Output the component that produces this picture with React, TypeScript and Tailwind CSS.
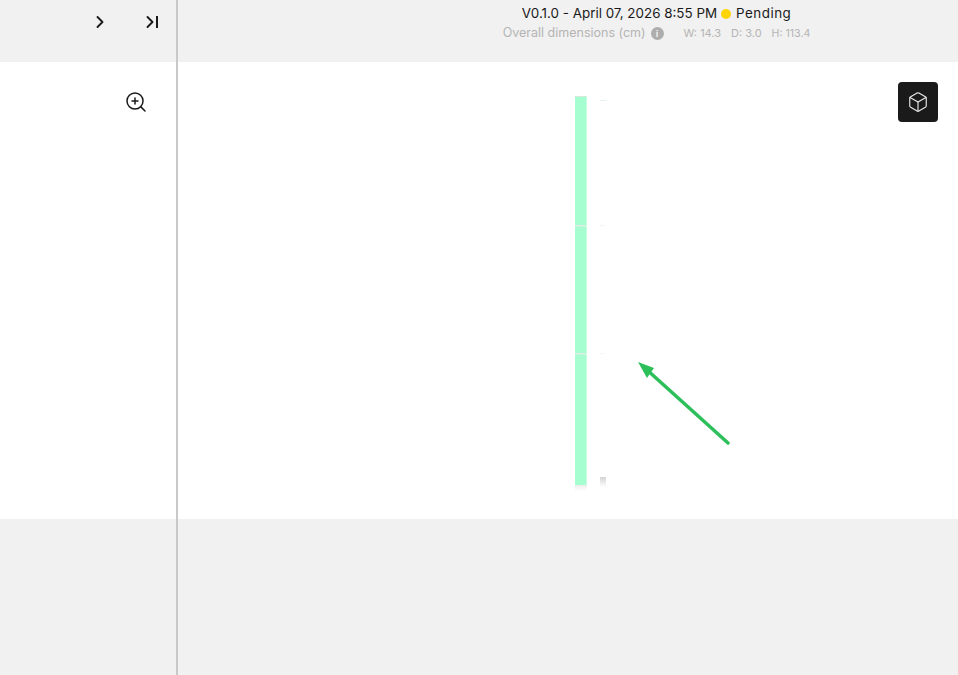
import { ChevronRight, Box, ZoomIn } from "lucide-react";

const FONT = "font-['Inter','Liberation_Sans',sans-serif]";

function ShelfPreview() {
  return (
    <svg className="absolute left-[397px] top-[34px] h-[400px] w-[50px]" viewBox="0 0 50 400" fill="none">
      <defs>
        <linearGradient id="fade" x1="0" y1="0" x2="0" y2="1">
          <stop offset="0" stopColor="#ececec" />
          <stop offset="1" stopColor="#ffffff" />
        </linearGradient>
        <linearGradient id="peg" x1="0" y1="0" x2="0" y2="1">
          <stop offset="0" stopColor="#d4d4d4" />
          <stop offset="1" stopColor="#ffffff" />
        </linearGradient>
      </defs>
      <rect x="0" y="0" width="12" height="389" fill="#a4fecf" />
      <rect x="0" y="0" width="12" height="1" fill="#d9e8e0" />
      <rect x="0" y="129" width="12" height="1.5" fill="#e4ece8" />
      <rect x="0" y="257" width="12" height="1.5" fill="#e4ece8" />
      <rect x="11" y="0" width="1" height="389" fill="#c4fede" />
      <rect x="0" y="389" width="12" height="6" fill="url(#fade)" />
      <rect x="25" y="4" width="6" height="1" fill="#e6f2ec" />
      <rect x="25" y="129" width="5" height="1" fill="#f0f6f3" />
      <rect x="25" y="257" width="5" height="1" fill="#f2f6f4" />
      <rect x="25" y="381" width="6" height="10" fill="url(#peg)" />
    </svg>
  );
}

function Arrow() {
  return (
    <svg className="absolute left-[458px] top-[297px] h-[90px] w-[100px]" viewBox="0 0 100 90" fill="none">
      <path d="M92 84 L10 10" stroke="#2cbf5a" strokeWidth="3.500" strokeLinecap="round" />
      <path d="M2 3 L18 9 L11 19 Z" fill="#2cbf5a" />
    </svg>
  );
}

export default function App() {
  return (
    <div className={`flex h-[675px] w-[958px] overflow-hidden bg-[#f1f1f1] ${FONT}`}>
      <div className="flex w-[178px] shrink-0 flex-col border-r-2 border-[#c9c9c9]">
        <div className="flex h-[62px] items-start gap-[30px] pl-[90px] pt-[12px] text-[#1a1a1a]">
          <ChevronRight className="h-5 w-5" strokeWidth={2.25} />
          <div className="relative flex h-5 w-5 items-center">
            <ChevronRight className="h-5 w-5" strokeWidth={2.25} />
            <span className="absolute left-[16px] top-[4px] h-[12px] w-[1.5px] bg-[#1a1a1a]" />
          </div>
        </div>
        <div className="flex h-[457px] justify-end bg-white pr-[28px] pt-[28px]">
          <ZoomIn className="h-6 w-6 text-[#1a1a1a]" strokeWidth={1.5} />
        </div>
      </div>

      <div className="flex flex-1 flex-col">
        <div className="flex h-[62px] flex-col items-center pl-[177px] pt-[4px]">
          <div className="flex h-[19px] items-center whitespace-nowrap text-[13.4px] text-[#1a1a1a]">
            <span>V0.1.0 - April 07, 2026 8:55 PM</span>
            <span className="ml-[4px] h-[10px] w-[10px] rounded-full bg-[#ffd400]" />
            <span className="ml-[5px] tracking-[0.5px]">Pending</span>
          </div>
          <div className="flex h-[20px] items-center whitespace-nowrap text-[#b4b4b4]">
            <span className="text-[12.500px]">Overall dimensions (cm)</span>
            <span className="ml-[5px] flex h-[13px] w-[13px] items-center justify-center rounded-full bg-[#adadad] text-[9px] font-bold leading-none text-[#f1f1f1]">
              i
            </span>
            <span className="ml-[20px] mt-[1px] text-[11px]">W: 14.3</span>
            <span className="ml-[10px] mt-[1px] text-[11px]">D: 3.0</span>
            <span className="ml-[10px] mt-[1px] text-[10.600px]">H: 113.4</span>
          </div>
        </div>
        <div className="relative h-[457px] bg-white">
          <ShelfPreview />
          <Arrow />
          <button className="absolute right-[20px] top-[20px] flex h-10 w-10 items-center justify-center rounded-[4px] bg-[#1a1a1a] text-[#e8e8e8]">
            <Box className="h-[22px] w-[22px]" strokeWidth={1.25} />
          </button>
        </div>
      </div>
    </div>
  );
}
